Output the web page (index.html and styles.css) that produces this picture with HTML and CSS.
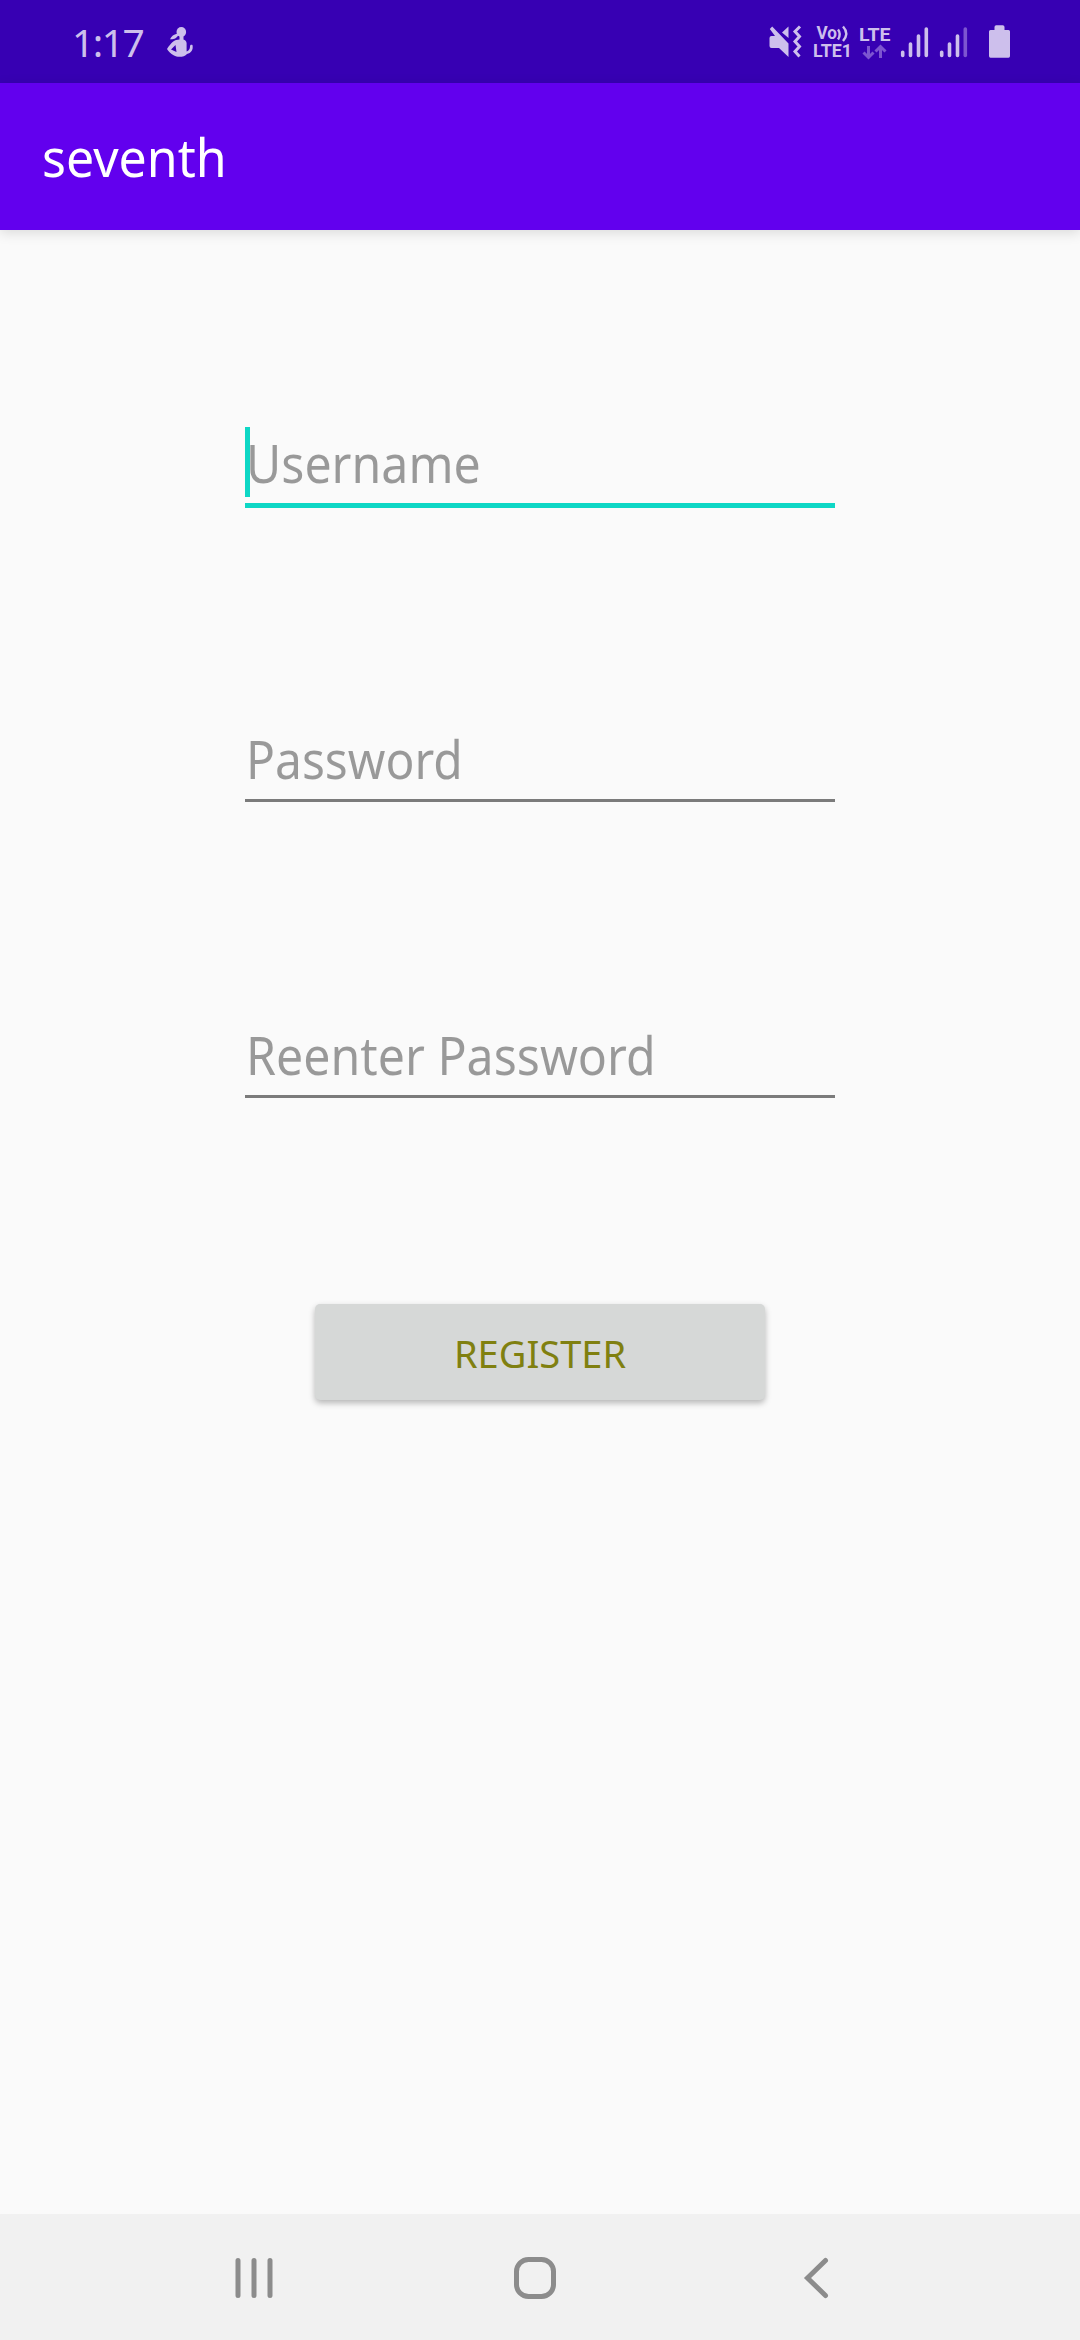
FILE: index.html
```html
<!DOCTYPE html>
<html lang="en">
<head>
<meta charset="utf-8">
<title>seventh</title>
<link rel="stylesheet" href="styles.css">
</head>
<body>
<div class="screen">
  <header class="status">
    <div class="status-left">
      <span class="clock">1:17</span>
      <svg class="icon" width="28" height="34" viewBox="166 25 28 34">
        <ellipse cx="181.300" cy="32" rx="4.800" ry="5"/>
        <path d="M178.500 34.500 C177 38.500 173.500 39.500 170 39.200 C171.300 36.500 174 34.200 177 33.800Z"/>
        <path fill-rule="evenodd" d="M179.500 36H183.500V39.500C186 40.500 187 42 186.600 45V51.500C189 50.500 190 49 190 46.500C190 44.800 191 44.500 192.500 45C193.500 50 191 53 187 54C184.500 57.200 177.500 57.700 174 55.500C170.500 53.500 168 51 167 49C169 45.500 173 41 176 40L179.500 39.500ZM175.500 45L171 49.500L176.500 52Z"/>
      </svg>
    </div>
    <div class="status-right">
      <svg class="icon mute" width="34" height="34" viewBox="768 25 34 34">
        <path d="M769.500 38Q769.500 36 771.500 36H775L769.800 29L772.200 26.500L788.500 43.500V57L779 48H771.500Q769.500 48 769.500 46ZM782 32.500L788.500 26.500V38Z"/>
        <path class="line" stroke-width="3" d="M800 26.500L795 31.500L799.500 36.500L795 41.500L799.500 46.500L795 51.500L799.500 56.500"/>
      </svg>
      <svg class="icon volte" width="42" height="40" viewBox="812 21 42 40">
        <text x="816.500" y="39" textLength="20.500" lengthAdjust="spacingAndGlyphs">Vo</text>
        <path class="line" stroke-width="2.400" d="M838 29.500Q841.500 34 838 39.500M843 26.500Q849.500 33.500 843 41"/>
        <text x="813" y="57" textLength="39" lengthAdjust="spacingAndGlyphs">LTE1</text>
      </svg>
      <svg class="icon lte" width="34" height="40" viewBox="858 21 34 40">
        <text x="859" y="40.500" textLength="31.500" lengthAdjust="spacingAndGlyphs">LTE</text>
        <path class="line dim" stroke-width="3" d="M868.500 46V57.500M863.500 52.500L868.500 57.500L873.500 52.500M880.500 58V46.500M875.500 51.500L880.500 46.500L885.500 51.500"/>
      </svg>
      <svg class="icon signal" width="30" height="34" viewBox="900 25 30 34">
        <path class="line round" stroke-width="3.600" d="M902.700 52.200V55.500M910.500 44V55.500M918.500 36V55.500M926.300 29V55.500"/>
      </svg>
      <svg class="icon signal-second" width="30" height="34" viewBox="939 25 30 34">
        <path class="line round" stroke-width="3.600" d="M941.700 52.200V55.500M949.500 44V55.500M957.500 36V55.500"/>
        <path class="line round dim" stroke-width="3.600" d="M965.300 29V55.500"/>
      </svg>
      <svg class="icon" width="23" height="34" viewBox="988 25 23 34">
        <path d="M994.500 30V27Q994.500 25.200 996.300 25.200H1002.700Q1004.500 25.200 1004.500 27V30H1008.500Q1010 30 1010 31.500V56Q1010 57.700 1008.500 57.700H990.500Q989 57.700 989 56V31.500Q989 30 990.500 30Z"/>
      </svg>
    </div>
  </header>
  <div class="appbar"><h1 class="title">seventh</h1></div>
  <main class="form">
    <div class="field focused"><span class="hint">Username</span></div>
    <div class="field"><span class="hint password">Password</span></div>
    <div class="field"><span class="hint">Reenter Password</span></div>
    <button class="register"><span class="register-label">REGISTER</span></button>
  </main>
  <nav class="navbar">
    <svg class="nav-icon" width="44" height="44" viewBox="232 2256 44 44">
      <path d="M238 2260.500V2295.500M254 2260.500V2295.500M270 2260.500V2295.500"/>
    </svg>
    <svg class="nav-icon" width="44" height="44" viewBox="513 2256 44 44">
      <rect x="516.500" y="2259.500" width="37" height="37" rx="12"/>
    </svg>
    <svg class="nav-icon" width="44" height="44" viewBox="794 2256 44 44">
      <path d="M825.500 2260.500L807.500 2278L825.500 2295.500"/>
    </svg>
  </nav>
</div>
</body>
</html>
```
FILE: styles.css
```css
* { box-sizing: border-box; }
body {
  margin: 0;
  font-family: "Noto Sans", "Open Sans", sans-serif;
  background: #fafafa;
}
.screen {
  width: 1080px;
  height: 2340px;
  display: flex;
  flex-direction: column;
  overflow: hidden;
}
.status {
  height: 83px;
  flex: none;
  display: flex;
  justify-content: space-between;
  padding: 0 69px 0 72px;
  background: #3700b3;
  color: #cdbfec;
}
.status-left, .status-right { display: flex; }
.status-left { gap: 22px; }
.clock {
  width: 72px;
  font-size: 39px;
  line-height: 84px;
  letter-spacing: -1.5px;
  white-space: nowrap;
}
.icon {
  display: block;
  flex: none;
  margin-top: 25px;
  fill: #cdbfec;
  overflow: visible;
}
.mute { margin-right: 10px; }
.volte { margin-top: 21px; margin-right: 4px; }
.lte { margin-top: 21px; margin-right: 8px; }
.signal { margin-right: 9px; }
.signal-second { margin-right: 19px; }
.icon text {
  font-family: Roboto, "Noto Sans", sans-serif;
  font-size: 18.5px;
  font-weight: 700;
}
.line { fill: none; stroke: #cdbfec; }
.round { stroke-linecap: round; }
.icon .dim { stroke: #7d55d0; }
.appbar {
  height: 147px;
  flex: none;
  padding: 0 42px;
  background: #6200ee;
  box-shadow: 0 3px 12px rgba(0, 0, 0, .13);
}
.title {
  margin: 0;
  font-size: 52px;
  font-weight: 400;
  line-height: 147px;
  color: #fff;
  transform: scaleX(.962);
  transform-origin: left;
}
.form {
  flex: 1;
  display: flex;
  flex-direction: column;
  align-items: center;
  padding-top: 197px;
}
.field {
  width: 590px;
  height: 79px;
  margin-bottom: 217px;
  padding-left: 1px;
  border-bottom: 3px solid #7b7b7b;
}
.focused {
  height: 81px;
  margin-bottom: 215px;
  border-bottom: 5px solid #0ed7c5;
  background: linear-gradient(#0ed7c5, #0ed7c5) 0 0 / 5px 70px no-repeat;
}
.hint {
  display: block;
  font-size: 52px;
  line-height: 71px;
  color: rgba(0, 0, 0, .39);
  white-space: nowrap;
  transform: scaleX(.928);
  transform-origin: left;
}
.password { transform: scaleX(.922); }
.register {
  width: 450px;
  height: 96px;
  margin: -11px 0 0;
  padding: 0;
  border: 0;
  border-radius: 5px;
  background: #d6d8d7;
  box-shadow: 0 3px 6px rgba(0, 0, 0, .28);
  font: 400 39px/98px "Noto Sans", "Open Sans", sans-serif;
  color: #808010;
}
.register-label {
  display: block;
  transform: scaleX(.975);
}
.navbar {
  height: 126px;
  flex: none;
  display: flex;
  justify-content: center;
  align-items: center;
  gap: 237px;
  padding-right: 10px;
  padding-top: 2px;
  background: #f1f1f1;
}
.nav-icon {
  display: block;
  fill: none;
  stroke: #8c8c8c;
  stroke-width: 5;
  stroke-linecap: round;
}
```
